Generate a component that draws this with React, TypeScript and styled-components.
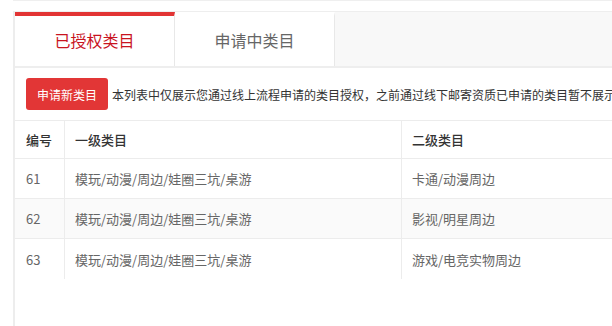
import styled, { createGlobalStyle } from "styled-components";

type Row = {
    id: number;
    first: string;
    second: string;
};

const rows: Row[] = [
    { id: 61, first: "模玩/动漫/周边/娃圈三坑/桌游", second: "卡通/动漫周边" },
    { id: 62, first: "模玩/动漫/周边/娃圈三坑/桌游", second: "影视/明星周边" },
    { id: 63, first: "模玩/动漫/周边/娃圈三坑/桌游", second: "游戏/电竞实物周边" },
];

const GlobalStyle = createGlobalStyle`
    html, body {
        margin: 0;
        padding: 0;
        background: #fff;
        overflow: hidden;
    }
    body {
        font-family: "Noto Sans CJK SC", "Liberation Sans", sans-serif;
        width: 612px;
        height: 326px;
    }
`;

const Page = styled.div`
    padding-left: 13px;
    height: 326px;
    box-sizing: border-box;
`;

const TopStrip = styled.div`
    height: 10px;
    border-top: 1px solid #efefef;
`;

const Panel = styled.div`
    width: 780px;
    height: 315px;
    border-left: 2px solid #ededed;
    box-sizing: border-box;
`;

const TabBar = styled.div`
    display: flex;
    height: 57px;
    background: #f8f8f8;
    border-top: 1px solid #eeeeee;
    border-bottom: 2px solid #eeeeee;
    box-sizing: border-box;
`;

const Tab = styled.div<{ $active?: boolean }>`
    width: 160px;
    display: flex;
    align-items: center;
    justify-content: center;
    background: #fff;
    box-sizing: border-box;
    font-size: 16px;
    color: ${p => (p.$active ? "#c9141f" : "#666")};
    border-top: 4px solid ${p => (p.$active ? "#e23434" : "#fff")};
    border-right: 1px solid #e8e8e8;
    padding-bottom: 2px;
`;

const Toolbar = styled.div`
    display: flex;
    align-items: center;
    gap: 4px;
    padding: 10px 11px;
    white-space: nowrap;
`;

const Button = styled.button`
    height: 32px;
    padding: 0 11px;
    border: none;
    border-radius: 3px;
    background: #e23636;
    color: #fff;
    font-family: inherit;
    font-size: 12px;
`;

const Notice = styled.span`
    font-size: 12px;
    color: #333;
`;

const Table = styled.div`
    border-top: 1px solid #ececec;
`;

const TableRow = styled.div<{ $head?: boolean; $striped?: boolean; $last?: boolean }>`
    display: grid;
    grid-template-columns: 50px 337px 1fr;
    height: ${p => (p.$head ? 38 : 40)}px;
    background: ${p => (p.$striped ? "#fafafa" : "#fff")};
    border-bottom: ${p => (p.$last ? "none" : "1px solid #ececec")};
    box-sizing: border-box;
`;

const Cell = styled.div<{ $head?: boolean; $first?: boolean }>`
    display: flex;
    align-items: center;
    padding-left: ${p => (p.$first ? 11 : 10)}px;
    font-size: 13px;
    color: ${p => (p.$head ? "#333" : "#666")};
    font-weight: ${p => (p.$head ? 500 : 400)};
    border-right: 1px solid #ececec;
    white-space: nowrap;
    &:last-child {
        border-right: none;
    }
`;

function App() {
    return (
        <>
            <GlobalStyle />
            <Page>
                <TopStrip />
                <Panel>
                    <TabBar>
                        <Tab $active>已授权类目</Tab>
                        <Tab>申请中类目</Tab>
                    </TabBar>
                    <Toolbar>
                        <Button>申请新类目</Button>
                        <Notice>
                            本列表中仅展示您通过线上流程申请的类目授权，之前通过线下邮寄资质已申请的类目暂不展示
                        </Notice>
                    </Toolbar>
                    <Table>
                        <TableRow $head>
                            <Cell $head $first>编号</Cell>
                            <Cell $head>一级类目</Cell>
                            <Cell $head>二级类目</Cell>
                        </TableRow>
                        {rows.map((row, index) => (
                            <TableRow
                                key={row.id}
                                $striped={index % 2 === 1}
                                $last={index === rows.length - 1}
                            >
                                <Cell $first>{row.id}</Cell>
                                <Cell>{row.first}</Cell>
                                <Cell>{row.second}</Cell>
                            </TableRow>
                        ))}
                    </Table>
                </Panel>
            </Page>
        </>
    );
}

export default App;
